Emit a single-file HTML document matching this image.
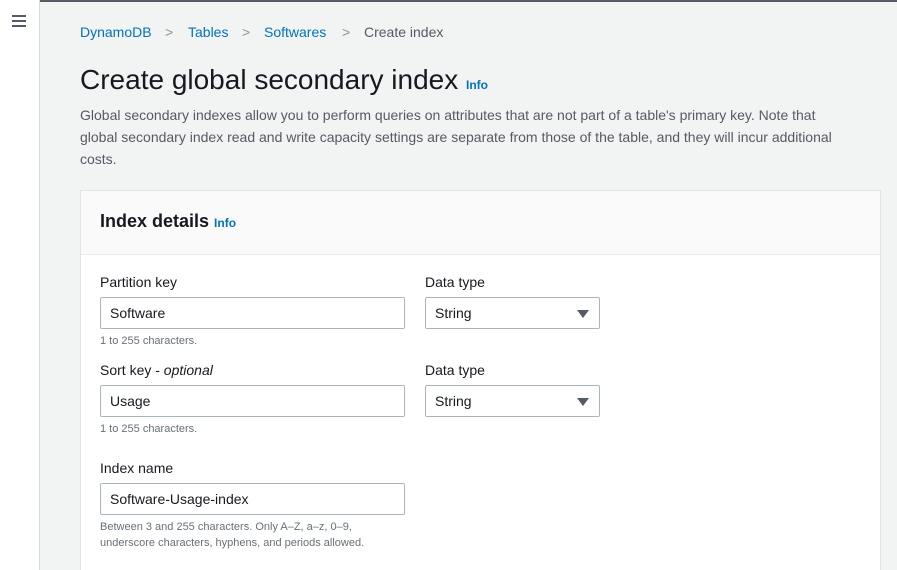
<!DOCTYPE html>
<html style="width:897px;height:570px;overflow:hidden"><head><style>
*{box-sizing:border-box;margin:0;padding:0}
body{width:897px;height:570px;overflow:hidden;font-family:"Liberation Sans",Arial,sans-serif;background:#f2f3f3;position:relative;color:#16191f}
.nav{position:absolute;left:0;top:0;width:40px;height:570px;background:#fff;border-right:1px solid #d5dbdb}
.top{position:absolute;left:0;top:0;width:897px;height:2px;background:#545b64}
.ham{position:absolute;left:12px;top:15px;width:14px}
.ham i{display:block;height:2px;background:#545b64;margin-bottom:3px}
.a{position:absolute;white-space:nowrap}
.bc{top:24px;font-size:14px;color:#0073bb}
.sep{color:#879596}
.card{position:absolute;left:80px;top:190px;width:801px;height:380px;background:#fff;border:1px solid #e3e3e3;border-bottom:none}
.hd{height:64px;background:#fafafa;border-bottom:1px solid #eaeded}
.lbl{font-size:14px;color:#16191f}
.inp{position:absolute;height:32px;border:1px solid #aab7b8;border-radius:2px;background:#fff;font-size:14px;padding:7px 9px;color:#16191f}
.hint{font-size:11px;color:#687078;line-height:16px}
.tri{position:absolute;right:10px;top:12px;width:0;height:0;border-left:6px solid transparent;border-right:6px solid transparent;border-top:8px solid #545b64}
.info{font-size:12px;font-weight:bold;color:#0073bb}
</style></head><body>
<div class="top"></div>
<div class="nav"><div class="ham"><i></i><i></i><i></i></div></div>
<div class="a bc" style="left:80px">DynamoDB</div>
<div class="a bc sep" style="left:165px">&gt;</div>
<div class="a bc" style="left:188px">Tables</div>
<div class="a bc sep" style="left:242px">&gt;</div>
<div class="a bc" style="left:264px">Softwares</div>
<div class="a bc sep" style="left:342px">&gt;</div>
<div class="a bc" style="left:364px;color:#545b64">Create index</div>
<div class="a" style="left:80px;top:64px;font-size:28px;color:#16191f">Create global secondary index <span class="info" style="font-size:12px">Info</span></div>
<div class="a" style="left:80px;top:104px;width:790px;white-space:normal;font-size:14px;line-height:22px;color:#545b64">Global secondary indexes allow you to perform queries on attributes that are not part of a table's primary key. Note that<br>global secondary index read and write capacity settings are separate from those of the table, and they will incur additional<br>costs.</div>
<div class="card"><div class="hd"></div></div>
<div class="a" style="left:100px;top:211px;font-size:18px;font-weight:bold">Index details <span class="info">Info</span></div>
<div class="a lbl" style="left:100px;top:274px">Partition key</div>
<div class="a lbl" style="left:425px;top:274px">Data type</div>
<div class="inp" style="left:100px;top:297px;width:305px">Software</div>
<div class="inp" style="left:425px;top:297px;width:175px">String<div class="tri"></div></div>
<div class="a hint" style="left:100px;top:333px">1 to 255 characters.</div>
<div class="a lbl" style="left:100px;top:362px">Sort key - <i>optional</i></div>
<div class="a lbl" style="left:425px;top:362px">Data type</div>
<div class="inp" style="left:100px;top:385px;width:305px">Usage</div>
<div class="inp" style="left:425px;top:385px;width:175px">String<div class="tri"></div></div>
<div class="a hint" style="left:100px;top:421px">1 to 255 characters.</div>
<div class="a lbl" style="left:100px;top:460px">Index name</div>
<div class="inp" style="left:100px;top:483px;width:305px">Software-Usage-index</div>
<div class="a hint" style="left:100px;top:519px">Between 3 and 255 characters. Only A–Z, a–z, 0–9,<br>underscore characters, hyphens, and periods allowed.</div>
</body></html>
